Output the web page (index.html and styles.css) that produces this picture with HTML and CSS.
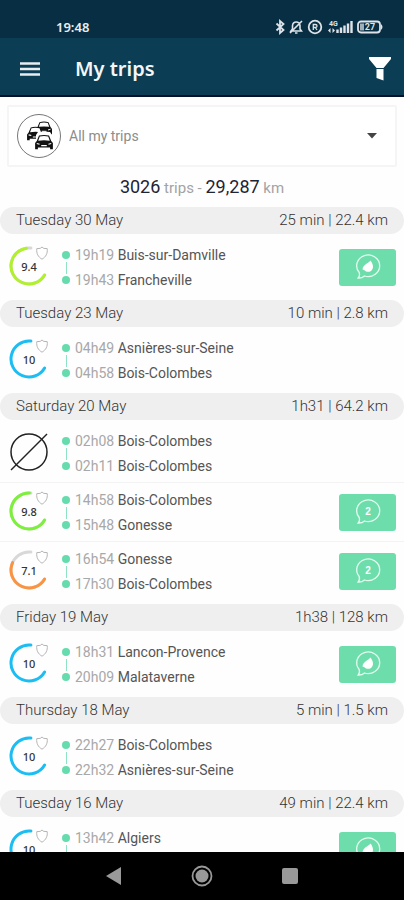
FILE: index.html
```
<!DOCTYPE html>
<html lang="en">
<head>
    <meta charset="UTF-8">
    <meta name="viewport" content="width=device-width, initial-scale=1.0">
    <title>My trips</title>
    <link rel="stylesheet" href="styles.css">
</head>
<body>
    <!-- shared icons -->
    <svg class="sprite" aria-hidden="true">
        <symbol id="shield" viewBox="0 0 14 14">
            <path d="M7 1 L8.800 2.400 L12.200 2.600 C12.800 7.400 10.800 11 7 13.200 C3.200 11 1.200 7.400 1.800 2.600 L5.200 2.400 Z" fill="#fff" stroke="#b5b5b5" stroke-width="1"/>
        </symbol>
        <symbol id="bubble" viewBox="0 0 28 28">
            <path d="M5.200 19.500 A11.500 10.800 0 1 1 10.500 23 Q8 25.200 4.200 25 Q6.200 22.800 5.200 19.500 Z" fill="none" stroke="#e4fbf0" stroke-width="1.300"/>
        </symbol>
        <symbol id="leaf" viewBox="0 0 28 28">
            <path d="M16.500 7.500 C19.500 11.500 20 15.500 17 18 C14.500 19.600 12 18.800 10.500 17.200 L8.500 16.500 C9 11.500 13.500 11 16.500 7.500 Z" fill="#fff"/>
        </symbol>
        <symbol id="none" viewBox="0 0 42 42">
            <circle cx="21" cy="20" r="18" fill="none" stroke="#222" stroke-width="1.500"/>
            <path d="M3 38 L39 2" stroke="#222" stroke-width="1.500"/>
        </symbol>
        <symbol id="car" viewBox="0 0 18 14">
            <path d="M2.500 6 L4.500 1.200 Q9 0 13.500 1.200 L15.500 6 L17 8 V13.500 H14.500 V12 H3.500 V13.500 H1 V8 Z" fill="#111"/>
            <path d="M3.800 5.800 L5.200 2 Q9 1 12.800 2 L14.200 5.800 Q9 5 3.800 5.800 Z" fill="#fff"/>
            <path d="M2.500 8.300 L5 9 M15.500 8.300 L13 9 M6.500 10.300 H11.500" stroke="#fff" stroke-width="1"/>
        </symbol>
    </svg>

    <div class="status-bar">
        <span class="clock">19:48</span>
        <div class="status-icons">
            <svg width="10" height="16" viewBox="0 0 10 16"><path d="M1.500 4.500 L8.500 11 L5 14 V2 L8.500 5 L1.500 11.500" fill="none" stroke="#dde3e8" stroke-width="1.800"/></svg>
            <svg width="14" height="16" viewBox="0 0 14 16"><path d="M2 12 H12.500 L11 10 V6.500 Q10.500 3 7.200 3 Q4 3 3.500 6.500 V10 Z M6 14 H8.500 M1 14 L13 2" fill="none" stroke="#dde3e8" stroke-width="1.600"/></svg>
            <svg width="16" height="16" viewBox="0 0 16 16"><circle cx="8" cy="8" r="6.300" fill="none" stroke="#dde3e8" stroke-width="1.800"/><path d="M6.300 11 V5.500 H8.500 Q10 5.500 10 7 Q10 8.500 8.500 8.500 H6.300 M8.300 8.500 L10 11" fill="none" stroke="#dde3e8" stroke-width="1.300"/></svg>
            <svg width="26" height="16" viewBox="0 0 26 16"><text x="2" y="7" class="network">4G</text><path d="M1 11.500 L3.500 9 V14 Z M8 11.500 L5.500 9 V14 Z" fill="#dde3e8"/><path d="M10.500 14 V10.500 M14 14 V8.500 M17.500 14 V6.500 M21 14 V4.500 M24.500 14 V2" stroke="#dde3e8" stroke-width="2.400"/></svg>
            <svg width="27" height="16" viewBox="0 0 27 16"><rect x="1" y="2.500" width="22" height="11" rx="3" fill="none" stroke="#dde3e8" stroke-width="1.800"/><rect x="3" y="4.500" width="4" height="7" fill="#9fb0ba"/><path d="M24 5 Q27 8 24 11 Z" fill="#dde3e8"/><text x="13" y="11" text-anchor="middle" class="battery">27</text></svg>
        </div>
    </div>

    <header class="app-bar">
        <button class="icon-btn" aria-label="Menu">
            <svg width="20" height="16" viewBox="0 0 20 16"><path d="M0 2.500 H20 M0 8 H20 M0 13.500 H20" stroke="#e9edf0" stroke-width="2.500"/></svg>
        </button>
        <h1>My trips</h1>
        <button class="icon-btn" aria-label="Filter">
            <svg width="24" height="26" viewBox="0 0 24 26"><path d="M1 1 H23 V3 L15.500 12 H8.500 L1 3 Z M8.500 13 H15.500 V24.500 L8.500 22 Z" fill="#fff"/></svg>
        </button>
    </header>

    <main class="content">
        <div class="trip-filter">
            <svg class="traffic" width="44" height="46" viewBox="1 0 44 46" aria-hidden="true">
                <circle cx="23" cy="23" r="21.500" fill="#fff" stroke="#777" stroke-width="1"/>
                <use href="#car" x="19" y="8" width="18" height="14"/>
                <use href="#car" x="10" y="13" width="19" height="15"/>
                <path d="M20 22 L22 19 Q28 18 34 19 L36 22 V26 H20 Z" fill="#fff"/>
                <use href="#car" x="18" y="21" width="20" height="16"/>
            </svg>
            <select aria-label="Trips shown">
                <option>All my trips</option>
            </select>
            <svg class="caret" width="10" height="6" viewBox="0 0 10 6" aria-hidden="true"><path d="M0 0 H10 L5 5.500 Z" fill="#444"/></svg>
        </div>

        <p class="summary"><strong>3026</strong> trips - <strong>29,287</strong> km</p>

        <section class="day">
            <h2><span>Tuesday 30 May</span><span>25 min | 22.4 km</span></h2>
            <article class="trip">
                <div class="score">
                    <svg viewBox="0 0 42 42">
                        <path class="track" d="M36.600 29 A18 18 0 1 1 22.900 2.100"/>
                        <path class="arc lime" pathLength="100" stroke-dasharray="94 100" d="M36.600 29 A18 18 0 1 1 22.900 2.100"/>
                        <use href="#shield" x="27" y="0" width="14" height="14"/>
                    </svg>
                    <span>9.4</span>
                </div>
                <ol class="stops">
                    <li><time>19h19</time> Buis-sur-Damville</li>
                    <li><time>19h43</time> Francheville</li>
                </ol>
                <button class="tip-btn" aria-label="Eco tip">
                    <svg viewBox="0 0 28 28"><use href="#bubble"/><use href="#leaf"/></svg>
                </button>
            </article>
        </section>

        <section class="day">
            <h2><span>Tuesday 23 May</span><span>10 min | 2.8 km</span></h2>
            <article class="trip">
                <div class="score">
                    <svg viewBox="0 0 42 42">
                        <path class="arc blue" d="M36.600 29 A18 18 0 1 1 22.900 2.100"/>
                        <use href="#shield" x="27" y="0" width="14" height="14"/>
                    </svg>
                    <span>10</span>
                </div>
                <ol class="stops">
                    <li><time>04h49</time> Asnières-sur-Seine</li>
                    <li><time>04h58</time> Bois-Colombes</li>
                </ol>
            </article>
        </section>

        <section class="day">
            <h2><span>Saturday 20 May</span><span>1h31 | 64.2 km</span></h2>
            <article class="trip">
                <div class="score">
                    <svg viewBox="0 0 42 42"><use href="#none"/></svg>
                </div>
                <ol class="stops">
                    <li><time>02h08</time> Bois-Colombes</li>
                    <li><time>02h11</time> Bois-Colombes</li>
                </ol>
            </article>
            <article class="trip">
                <div class="score">
                    <svg viewBox="0 0 42 42">
                        <path class="track" d="M36.600 29 A18 18 0 1 1 22.900 2.100"/>
                        <path class="arc green" pathLength="100" stroke-dasharray="98 100" d="M36.600 29 A18 18 0 1 1 22.900 2.100"/>
                        <use href="#shield" x="27" y="0" width="14" height="14"/>
                    </svg>
                    <span>9.8</span>
                </div>
                <ol class="stops">
                    <li><time>14h58</time> Bois-Colombes</li>
                    <li><time>15h48</time> Gonesse</li>
                </ol>
                <button class="tip-btn" aria-label="2 tips">
                    <svg viewBox="0 0 28 28"><use href="#bubble"/><text x="14" y="17" text-anchor="middle">2</text></svg>
                </button>
            </article>
            <article class="trip">
                <div class="score">
                    <svg viewBox="0 0 42 42">
                        <path class="track" d="M36.600 29 A18 18 0 1 1 22.900 2.100"/>
                        <path class="arc orange" pathLength="100" stroke-dasharray="71 100" d="M36.600 29 A18 18 0 1 1 22.900 2.100"/>
                        <use href="#shield" x="27" y="0" width="14" height="14"/>
                    </svg>
                    <span>7.1</span>
                </div>
                <ol class="stops">
                    <li><time>16h54</time> Gonesse</li>
                    <li><time>17h30</time> Bois-Colombes</li>
                </ol>
                <button class="tip-btn" aria-label="2 tips">
                    <svg viewBox="0 0 28 28"><use href="#bubble"/><text x="14" y="17" text-anchor="middle">2</text></svg>
                </button>
            </article>
        </section>

        <section class="day">
            <h2><span>Friday 19 May</span><span>1h38 | 128 km</span></h2>
            <article class="trip">
                <div class="score">
                    <svg viewBox="0 0 42 42">
                        <path class="arc blue" d="M36.600 29 A18 18 0 1 1 22.900 2.100"/>
                        <use href="#shield" x="27" y="0" width="14" height="14"/>
                    </svg>
                    <span>10</span>
                </div>
                <ol class="stops">
                    <li><time>18h31</time> Lancon-Provence</li>
                    <li><time>20h09</time> Malataverne</li>
                </ol>
                <button class="tip-btn" aria-label="Eco tip">
                    <svg viewBox="0 0 28 28"><use href="#bubble"/><use href="#leaf"/></svg>
                </button>
            </article>
        </section>

        <section class="day">
            <h2><span>Thursday 18 May</span><span>5 min | 1.5 km</span></h2>
            <article class="trip">
                <div class="score">
                    <svg viewBox="0 0 42 42">
                        <path class="arc blue" d="M36.600 29 A18 18 0 1 1 22.900 2.100"/>
                        <use href="#shield" x="27" y="0" width="14" height="14"/>
                    </svg>
                    <span>10</span>
                </div>
                <ol class="stops">
                    <li><time>22h27</time> Bois-Colombes</li>
                    <li><time>22h32</time> Asnières-sur-Seine</li>
                </ol>
            </article>
        </section>

        <section class="day">
            <h2><span>Tuesday 16 May</span><span>49 min | 22.4 km</span></h2>
            <article class="trip">
                <div class="score">
                    <svg viewBox="0 0 42 42">
                        <path class="arc blue" d="M36.600 29 A18 18 0 1 1 22.900 2.100"/>
                        <use href="#shield" x="27" y="0" width="14" height="14"/>
                    </svg>
                    <span>10</span>
                </div>
                <ol class="stops last">
                    <li><time>13h42</time> Algiers</li>
                </ol>
                <button class="tip-btn" aria-label="Eco tip">
                    <svg viewBox="0 0 28 28"><use href="#bubble"/><use href="#leaf"/></svg>
                </button>
            </article>
        </section>
    </main>

    <nav class="nav-bar">
        <button class="icon-btn" aria-label="Back">
            <svg width="24" height="24" viewBox="0 0 24 24"><path d="M4 12 L19 3 V21 Z" fill="#999"/></svg>
        </button>
        <button class="icon-btn" aria-label="Home">
            <svg width="24" height="24" viewBox="0 0 24 24"><circle cx="12" cy="12" r="9.500" fill="none" stroke="#999" stroke-width="1.800"/><circle cx="12" cy="12" r="6.500" fill="#999"/></svg>
        </button>
        <button class="icon-btn" aria-label="Recent apps">
            <svg width="24" height="24" viewBox="0 0 24 24"><rect x="4" y="4" width="16" height="16" rx="2" fill="#999"/></svg>
        </button>
    </nav>
</body>
</html>
```
FILE: styles.css
```
* {
    box-sizing: border-box;
}
body {
    margin: 0;
    height: 100vh;
    display: flex;
    flex-direction: column;
    background: #fefefe;
    color: #333;
    font-family: Roboto, "Liberation Sans", sans-serif;
    font-size: 14px;
}
svg {
    display: block;
}
.sprite {
    position: absolute;
    width: 0;
    height: 0;
}
button {
    border: none;
    padding: 0;
    cursor: pointer;
}
.icon-btn {
    background: none;
}
.status-bar {
    flex: none;
    display: flex;
    justify-content: space-between;
    align-items: flex-end;
    height: 38px;
    padding: 0 20px 3px 56px;
    background: #082e43;
    color: #e9edf0;
}
.clock {
    font-family: "Noto Sans", sans-serif;
    font-size: 13px;
    font-weight: 600;
    line-height: 16px;
}
.status-icons {
    display: flex;
    gap: 4px;
}
.network, .battery {
    fill: #dde3e8;
    font-size: 7px;
    font-weight: 700;
}
.battery {
    font-size: 9px;
}
.app-bar {
    flex: none;
    display: flex;
    align-items: center;
    height: 59px;
    padding: 4px 12px 0 20px;
    background: #0b3d54;
    border-bottom: 2px solid #03122c;
}
.app-bar h1 {
    flex: 1;
    margin: 0 0 0 35px;
    color: #f4f6f8;
    font-family: "Noto Sans", sans-serif;
    font-size: 20px;
    font-weight: 600;
    line-height: 28px;
}
.content {
    flex: 1;
    min-height: 0;
    overflow: hidden;
}
.trip-filter {
    position: relative;
    display: flex;
    align-items: center;
    height: 62px;
    margin: 8px 7px 0;
    padding-left: 8px;
    background: #fff;
    border: 2px solid #f5f5f5;
    border-radius: 2px;
}
.trip-filter select {
    flex: 1;
    height: 46px;
    padding: 0 28px 0 8px;
    appearance: none;
    border: none;
    background: none;
    color: #8c8c8c;
    font: inherit;
}
.caret {
    position: absolute;
    right: 18px;
}
.summary {
    height: 24px;
    margin: 8px 0;
    text-align: center;
    color: #a3a3a3;
    font-size: 15px;
    line-height: 24px;
}
.summary strong {
    color: #1d2433;
    font-size: 18px;
    font-weight: 400;
}
.day {
    margin-bottom: 4px;
}
.day h2 {
    display: flex;
    justify-content: space-between;
    margin: 0 0 4px;
    padding: 0 16px;
    background: #efefef;
    border-radius: 14px;
    font-size: 15px;
    font-weight: 300;
    line-height: 27px;
}
.trip {
    display: flex;
    align-items: center;
    height: 58px;
    padding: 0 8px;
}
.trip + .trip {
    height: 59px;
    border-top: 1px solid #f3f3f3;
}
.score {
    display: grid;
    width: 42px;
    height: 42px;
}
.score svg, .score span {
    grid-area: 1 / 1;
}
.score span {
    place-self: center;
    font-family: "Noto Sans", sans-serif;
    font-size: 11px;
    font-weight: 500;
    line-height: 14px;
    color: #333;
}
.arc, .track {
    fill: none;
    stroke-width: 3;
    stroke-linecap: round;
}
.track {
    stroke: #d8d8d8;
}
.lime {
    stroke: #b0f02c;
}
.green {
    stroke: #7df03c;
}
.blue {
    stroke: #1cbdf2;
}
.orange {
    stroke: #fb9440;
}
.stops {
    flex: 1;
    margin: 0 0 0 12px;
    padding: 2px 0 0;
    list-style: none;
    color: #555;
}
.stops li {
    position: relative;
    height: 25px;
    padding-left: 13px;
    line-height: 25px;
}
.stops.last {
    height: 52px;
}
/* green dot in front of each stop */
.stops li::before {
    content: "";
    position: absolute;
    left: 0;
    top: 8px;
    width: 8px;
    height: 8px;
    border-radius: 50%;
    background: #66dcae;
}
/* line down to the arrival */
.stops li:first-child::after {
    content: "";
    position: absolute;
    left: 4px;
    top: 19px;
    width: 1px;
    height: 12px;
    background: #8fe3c4;
}
.stops time {
    color: #a8a8a8;
}
.tip-btn {
    display: flex;
    justify-content: center;
    align-items: center;
    width: 57px;
    height: 37px;
    background: #6ddeab;
    border-radius: 3px;
}
.tip-btn svg {
    width: 28px;
    height: 28px;
}
.tip-btn text {
    fill: #fff;
    font-size: 10px;
    font-weight: 700;
}
.nav-bar {
    flex: none;
    display: flex;
    justify-content: center;
    align-items: center;
    gap: 64px;
    height: 48px;
    background: #000;
}
```
